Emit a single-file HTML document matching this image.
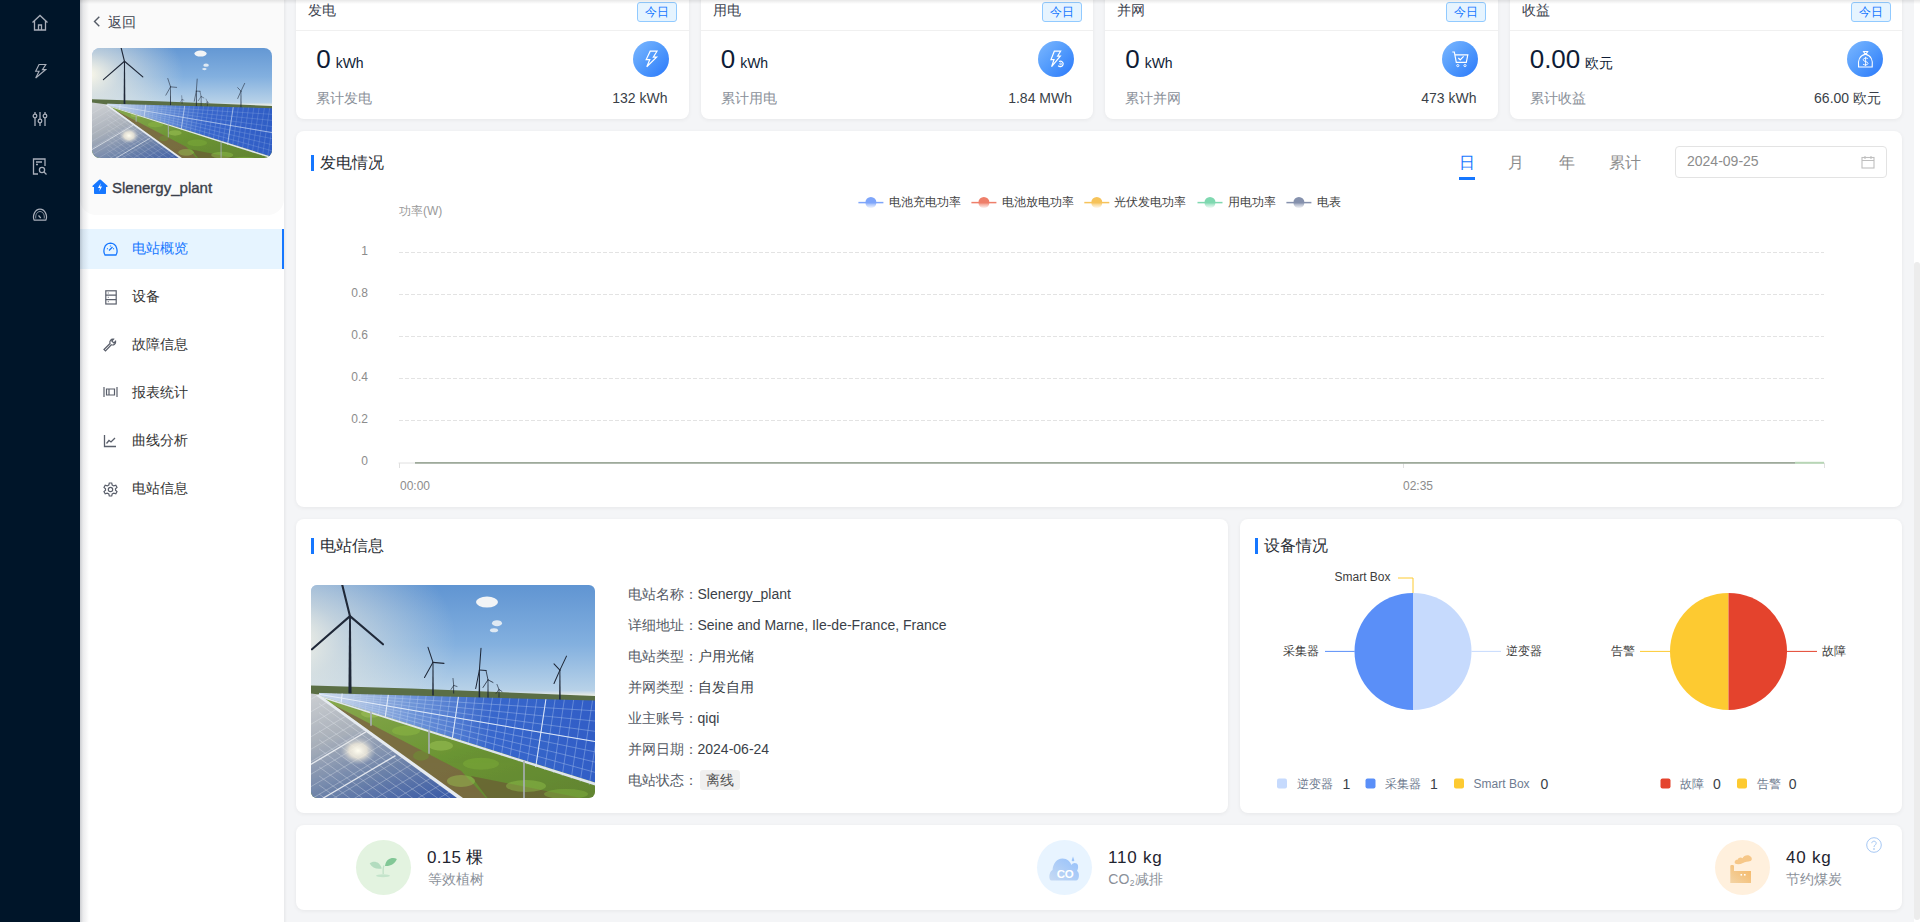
<!DOCTYPE html>
<html><head><meta charset="utf-8">
<style>
*{box-sizing:border-box;margin:0;padding:0}
html,body{width:1920px;height:922px;overflow:hidden;background:#f4f5f7;font-family:"Liberation Sans",sans-serif;color:#333}
.a{position:absolute;white-space:nowrap}
#nav{position:absolute;left:0;top:0;width:80px;height:922px;background:#001529}
#side{position:absolute;left:80px;top:0;width:204px;height:922px;background:#fff}
#sidetop{position:absolute;left:0;top:0;width:204px;height:215px;background:#fafafa;border-radius:0 0 16px 16px}
.card{position:absolute;background:#fff;border-radius:8px;box-shadow:0 1px 4px rgba(0,0,0,0.06)}
.t14{font-size:14px;line-height:16px}
.t12{font-size:12px;line-height:14px}
.tag{position:absolute;width:40px;height:20px;border:1px solid #91caff;background:#e6f4ff;color:#1677ff;border-radius:3px;font-size:12px;line-height:18px;text-align:center}
.ico{position:absolute;width:36px;height:36px;border-radius:50%;background:linear-gradient(135deg,#7db8ff 0%,#519afc 50%,#2a78fb 100%)}
.bar{position:absolute;width:3px;height:16px;background:#1677ff}
.menu{position:absolute;left:0;width:204px;height:40px}
.menu .tx{position:absolute;left:52px;top:11.4px;font-size:14px;line-height:16px;color:#333}
.menu svg{position:absolute;left:23px;top:13px}
</style></head><body>
<div id="nav">
  <svg class="a" style="left:31px;top:14px" width="18" height="18" viewBox="0 0 18 18" fill="none" stroke="#a9afba" stroke-width="1.3"><path d="M1.5 8.5 L9 1.5 L16.5 8.5 M3.5 7 V16 H14.5 V7 M7.5 16 V11 H10.5 V16"/></svg>
  <svg class="a" style="left:33.5px;top:62.5px" width="13.5" height="16.5" viewBox="0 0 16 18" fill="none" stroke="#a9afba" stroke-width="1.35"><path d="M6 1 H14 L10 7 H14 L2 17 L6 9 H2 Z"/></svg>
  <svg class="a" style="left:32px;top:111px" width="16" height="16" viewBox="0 0 16 16" fill="none" stroke="#a9afba" stroke-width="1.3"><path d="M3 1V15M8 1V15M13 1V15"/><circle cx="3" cy="5" r="1.8" fill="#001529"/><circle cx="8" cy="10" r="1.8" fill="#001529"/><circle cx="13" cy="5" r="1.8" fill="#001529"/></svg>
  <svg class="a" style="left:32px;top:158px" width="16" height="17" viewBox="0 0 16 17" fill="none" stroke="#a9afba" stroke-width="1.3"><path d="M6 16H1.5V1H13V8"/><path d="M4 4H10M4 6.5H6"/><circle cx="10" cy="12" r="2.6"/><path d="M12 14L14.5 16.5"/></svg>
  <svg class="a" style="left:32px;top:208px" width="16" height="13" viewBox="0 0 16 13" fill="none" stroke="#a9afba" stroke-width="1.2"><path d="M2.2 12.2C0.2 8 2.8 1.2 8 1.2C13.2 1.2 15.8 8 13.8 12.2Z"/><path d="M3.8 10.5C3.2 6.5 5.3 3.5 8 3.5C10.7 3.5 12.8 6.5 12.2 10.5" stroke-width="0.8"/><path d="M6.5 7.5L8.8 10"/></svg>
</div>
<div id="side">
  <div id="sidetop"></div>
  <div style="position:absolute;z-index:5;left:0;top:0;width:9px;height:922px;background:linear-gradient(90deg,rgba(0,10,30,0.2),rgba(0,10,30,0.08) 35%,rgba(0,0,0,0))"></div>
  <svg class="a" style="left:13px;top:16px" width="8" height="11" viewBox="0 0 8 11" fill="none" stroke="#555b66" stroke-width="1.4"><path d="M6.3 0.8L1.5 5.5L6.3 10.3"/></svg>
  <div class="a t14" style="left:27.7px;top:14px;color:#3e4450">返回</div>
  <div class="a" id="simg" style="left:12px;top:48px;width:180px;height:110px;border-radius:8px;overflow:hidden"><svg width="180" height="110" viewBox="0 0 180 110"><g transform="translate(10.85,-3.9) scale(0.555)"><defs><linearGradient id="ssky" x1="0" y1="0" x2="0" y2="1"><stop offset="0" stop-color="#5a90d0"/><stop offset="0.3" stop-color="#83b0df"/><stop offset="0.5" stop-color="#b8d2e8"/><stop offset="0.52" stop-color="#e6ebe6"/><stop offset="1" stop-color="#e6ebe6"/></linearGradient><radialGradient id="ssun" cx="0" cy="0.28" r="0.5"><stop offset="0" stop-color="#fffbea" stop-opacity="1"/><stop offset="0.35" stop-color="#f4efe0" stop-opacity="0.6"/><stop offset="1" stop-color="#f4efe0" stop-opacity="0"/></radialGradient><linearGradient id="span" x1="0" y1="0" x2="1" y2="0"><stop offset="0" stop-color="#d6dfe8"/><stop offset="0.3" stop-color="#6f95d8"/><stop offset="0.55" stop-color="#3a68cc"/><stop offset="1" stop-color="#2f5cc4"/></linearGradient><linearGradient id="span2" x1="0" y1="0" x2="0.6" y2="1"><stop offset="0" stop-color="#d6d8da"/><stop offset="0.4" stop-color="#a9b0ba"/><stop offset="0.7" stop-color="#6f84aa"/><stop offset="1" stop-color="#3e5ea8"/></linearGradient><linearGradient id="sgr" x1="0" y1="0" x2="1" y2="1"><stop offset="0" stop-color="#8fae55"/><stop offset="0.5" stop-color="#6b9434"/><stop offset="1" stop-color="#5e7f30"/></linearGradient><radialGradient id="sglint" cx="0.5" cy="0.5" r="0.5"><stop offset="0" stop-color="#fffdf0"/><stop offset="0.5" stop-color="#f5eedc" stop-opacity="0.8"/><stop offset="1" stop-color="#c8ccd2" stop-opacity="0"/></radialGradient></defs><rect x="-30" y="-10" width="350" height="230" fill="url(#ssky)"/><rect x="-30" y="-10" width="350" height="230" fill="url(#ssun)"/><ellipse cx="176" cy="17" rx="11" ry="5.5" fill="#f2f4f6"/><ellipse cx="186" cy="38" rx="5" ry="3" fill="#dfe9f3"/><ellipse cx="183" cy="45" rx="4" ry="2" fill="#dfe9f3"/><path d="M-30 99 L100 103 L320 112 L320 122 L-30 112Z" fill="#5b6f45"/><path d="M37.44 108 L38.09 31 L39.91 31 L40.56 108Z" fill="#1f2838"/><path d="M39 31 L31 -1" stroke="#1f2838" stroke-width="2.08" stroke-linecap="round"/><path d="M39 31 L1 64" stroke="#1f2838" stroke-width="2.08" stroke-linecap="round"/><path d="M39 31 L72 59" stroke="#1f2838" stroke-width="2.08" stroke-linecap="round"/><path d="M121.22 110 L121.545 77 L122.455 77 L122.78 110Z" fill="#1f2838"/><path d="M122 77 L117 62" stroke="#1f2838" stroke-width="1.04" stroke-linecap="round"/><path d="M122 77 L113.5 92" stroke="#1f2838" stroke-width="1.04" stroke-linecap="round"/><path d="M122 77 L133 78" stroke="#1f2838" stroke-width="1.04" stroke-linecap="round"/><path d="M167.62 113 L167.945 84.7 L168.85500000000002 84.7 L169.18 113Z" fill="#1f2838"/><path d="M168.4 84.7 L170 63" stroke="#1f2838" stroke-width="1.04" stroke-linecap="round"/><path d="M168.4 84.7 L164.7 103" stroke="#1f2838" stroke-width="1.04" stroke-linecap="round"/><path d="M168.4 84.7 L175 85" stroke="#1f2838" stroke-width="1.04" stroke-linecap="round"/><path d="M176.4 115 L176.65 94.4 L177.35 94.4 L177.6 115Z" fill="#1f2838"/><path d="M177 94.4 L175 85" stroke="#1f2838" stroke-width="0.8" stroke-linecap="round"/><path d="M177 94.4 L172 102" stroke="#1f2838" stroke-width="0.8" stroke-linecap="round"/><path d="M177 94.4 L182 97" stroke="#1f2838" stroke-width="0.8" stroke-linecap="round"/><path d="M248.12 115 L248.445 84.7 L249.35500000000002 84.7 L249.68 115Z" fill="#1f2838"/><path d="M248.9 84.7 L255.5 70.8" stroke="#1f2838" stroke-width="1.04" stroke-linecap="round"/><path d="M248.9 84.7 L243 78.5" stroke="#1f2838" stroke-width="1.04" stroke-linecap="round"/><path d="M248.9 84.7 L243 98" stroke="#1f2838" stroke-width="1.04" stroke-linecap="round"/><path d="M142.22 108 L142.42 100 L142.98 100 L143.17999999999998 108Z" fill="#1f2838"/><path d="M142.7 100 L142 93" stroke="#1f2838" stroke-width="0.6400000000000001" stroke-linecap="round"/><path d="M142.7 100 L140 104" stroke="#1f2838" stroke-width="0.6400000000000001" stroke-linecap="round"/><path d="M142.7 100 L146 101" stroke="#1f2838" stroke-width="0.6400000000000001" stroke-linecap="round"/><path d="M187.52 112 L187.72 104 L188.28 104 L188.48 112Z" fill="#1f2838"/><path d="M188 104 L186 99" stroke="#1f2838" stroke-width="0.6400000000000001" stroke-linecap="round"/><path d="M188 104 L185 108" stroke="#1f2838" stroke-width="0.6400000000000001" stroke-linecap="round"/><path d="M188 104 L191 106" stroke="#1f2838" stroke-width="0.6400000000000001" stroke-linecap="round"/><path d="M-30 108 L320 118 L320 230 L-30 230Z" fill="url(#sgr)"/><path d="M20 118 L150 185 L175 212 L135 212Z" fill="#7d6044" opacity="0.75"/><path d="M160 190 L320 222 L320 230 L190 230Z" fill="#6a5436" opacity="0.6"/><ellipse cx="60" cy="128" rx="10" ry="4" fill="#a9c860" opacity="0.45"/><ellipse cx="95" cy="145" rx="14" ry="5" fill="#8fbd45" opacity="0.45"/><ellipse cx="130" cy="160" rx="12" ry="5" fill="#a6cc58" opacity="0.45"/><ellipse cx="170" cy="178" rx="18" ry="6" fill="#7fb03a" opacity="0.45"/><ellipse cx="215" cy="200" rx="20" ry="6" fill="#92c24c" opacity="0.45"/><ellipse cx="255" cy="208" rx="22" ry="5" fill="#86b640" opacity="0.45"/><ellipse cx="150" cy="195" rx="14" ry="6" fill="#9cc653" opacity="0.45"/><ellipse cx="110" cy="170" rx="8" ry="5" fill="#6d9a32" opacity="0.45"/><path d="M8 107.5 L320 116 L320 208 L8 110Z" fill="url(#span)"/><path d="M11.1 107.6L11.0 111.0 M15.4 107.7L15.0 112.3 M20.2 107.8L19.7 113.8 M25.5 108.0L24.8 115.5 M31.2 108.1L30.1 117.3 M37.1 108.3L35.8 119.1 M43.3 108.5L41.7 121.1 M49.7 108.6L47.9 123.1 M56.3 108.8L54.2 125.2 M63.2 109.0L60.7 127.3 M70.1 109.2L67.3 129.5 M77.3 109.4L74.2 131.8 M84.6 109.6L81.1 134.0 M92.0 109.8L88.2 136.4 M99.6 110.0L95.4 138.8 M107.2 110.2L102.8 141.2 M115.1 110.4L110.3 143.6 M123.0 110.6L117.8 146.1 M131.0 110.9L125.5 148.6 M139.2 111.1L133.3 151.2 M147.4 111.3L141.2 153.8 M155.8 111.5L149.1 156.4 M164.2 111.8L157.2 159.1 M172.8 112.0L165.4 161.8 M181.4 112.2L173.6 164.5 M190.1 112.5L181.9 167.2 M198.9 112.7L190.3 170.0 M207.8 112.9L198.8 172.7 M216.7 113.2L207.4 175.6 M225.8 113.4L216.0 178.4 M234.9 113.7L224.7 181.3 M244.1 113.9L233.5 184.1 M253.3 114.2L242.3 187.1 M262.6 114.4L251.2 190.0 M272.0 114.7L260.2 192.9 M281.5 115.0L269.2 195.9 M291.0 115.2L278.3 198.9 M300.6 115.5L287.5 201.9 M310.3 115.7L296.7 204.9 M8 107.8L320 127.5 M8 108.1L320 139.0 M8 108.4L320 150.5 M8 108.8L320 162.0 M8 109.1L320 173.5 M8 109.4L320 185.0 M8 109.7L320 196.5" stroke="#c0d4f4" stroke-width="0.45" opacity="0.8"/><path d="M31.2 108.1L30.1 117.3 M77.3 109.4L74.2 131.8 M147.4 111.3L141.2 153.8 M234.9 113.7L224.7 181.3 M8 108.7L320 162" stroke="#e8f0fb" stroke-width="1" opacity="0.9"/><path d="M8 110 L320 208 L320 211 L8 111.5Z" fill="#dfe5ec"/><path d="M118 144V168M213 175V212M60 126V140" stroke="#a9b0b6" stroke-width="1.6"/><clipPath id="slp"><path d="M-30 104 L8 109 L150 212 L160 230 L-30 230Z"/></clipPath><path d="M-30 104 L8 109 L150 212 L160 230 L-30 230Z" fill="url(#span2)"/><g clip-path="url(#slp)"><path d="M8 118.0L208 261.6 M8 127.0L208 270.6 M8 136.0L208 279.6 M8 145.0L208 288.6 M8 154.0L208 297.6 M8 163.0L208 306.6 M8 172.0L208 315.6 M8 181.0L208 324.6 M8 190.0L208 333.6 M8 199.0L208 342.6 M8 208.0L208 351.6 M8.0 109.0L-192.0 227.0 M17.5 115.8L-182.5 233.8 M27.0 122.6L-173.0 240.6 M36.5 129.5L-163.5 247.5 M46.0 136.3L-154.0 254.3 M55.5 143.1L-144.5 261.1 M65.0 149.9L-135.0 267.9 M74.5 156.7L-125.5 274.7 M84.0 163.6L-116.0 281.6 M93.5 170.4L-106.5 288.4 M103.0 177.2L-97.0 295.2 M112.5 184.0L-87.5 302.0 M122.0 190.9L-78.0 308.9 M131.5 197.7L-68.5 315.7 M141.0 204.5L-59.0 322.5 M150.5 211.3L-49.5 329.3" stroke="#eef2f6" stroke-width="0.5" opacity="0.6"/><path d="M55 146L-45 205M84.5 169.8L-20 231" stroke="#f4f6f9" stroke-width="1.3" opacity="0.85"/></g><ellipse cx="47" cy="165" rx="18" ry="14" fill="url(#sglint)"/><path d="M8 109 L152 212 L146 212 L5 110Z" fill="#e6ebf0"/></g></svg></div><!--/simg-->
  <svg class="a" style="left:12px;top:179px" width="16" height="16" viewBox="0 0 16 16"><path d="M7.2 0.8Q8 0.2 8.8 0.8L15.4 6.8Q16 7.6 15.2 7.9H14V14.2Q14 15 13.2 15H2.8Q2 15 2 14.2V7.9H0.8Q0 7.6 0.6 6.8Z" fill="#1677ff"/><path d="M8.8 4L6 9H8L7.2 12.5L10 7.5H8Z" fill="#fff"/></svg>
  <div class="a" style="left:32px;top:179px;font-size:15px;line-height:17px;-webkit-text-stroke:0.35px #3a3f4a;color:#3a3f4a">Slenergy_plant</div>

  <div class="menu" style="top:229px;background:#e6f4ff"><div style="position:absolute;right:0;top:0;width:2px;height:40px;background:#1677ff"></div>
    <svg width="15" height="14" viewBox="0 0 15 14" fill="none" stroke="#1677ff" stroke-width="1.3"><path d="M2 13C0 10 0.5 1.5 7.5 1.2C14.5 1.5 15 10 13 13Z"/><path d="M6 8.5L9.5 5M4 6.5L4.8 7M7.5 3.6V4.6M11 6.5L10.2 7"/></svg>
    <div class="tx" style="color:#1677ff">电站概览</div></div>
  <div class="menu" style="top:277px">
    <svg style="left:25px" width="12" height="15" viewBox="0 0 12 15" fill="none" stroke="#5a5f6b" stroke-width="1.2"><rect x="0.8" y="0.8" width="10.4" height="13.2"/><path d="M0.8 5.2H11.2M0.8 9.6H11.2"/><path d="M3.3 2.5V3.5M3.3 6.8V7.8M3.3 11.2V12.2" stroke-width="0.9"/></svg>
    <div class="tx">设备</div></div>
  <div class="menu" style="top:325px">
    <svg width="14" height="14" viewBox="0 0 14 14" fill="none" stroke="#5a5f6b" stroke-width="1.2"><path d="M1 11.5L7 5.5C6.2 3 8 0.8 10.5 1.2L8.8 3L10.8 5L12.6 3.3C13 5.8 10.8 7.6 8.3 6.8L2.5 13Z"/></svg>
    <div class="tx">故障信息</div></div>
  <div class="menu" style="top:373px">
    <svg width="15" height="12" viewBox="0 0 15 12" fill="none" stroke="#5a5f6b" stroke-width="1.2"><path d="M1 1V11M14 1V11M3.5 3H11.5V9H3.5ZM6 3V9"/></svg>
    <div class="tx">报表统计</div></div>
  <div class="menu" style="top:421px">
    <svg width="14" height="14" viewBox="0 0 14 14" fill="none" stroke="#5a5f6b" stroke-width="1.3"><path d="M1.5 1V12.5H13"/><path d="M3.5 9.5L6 6.5L8 8L12 4"/></svg>
    <div class="tx">曲线分析</div></div>
  <div class="menu" style="top:469px">
    <svg width="15" height="15" viewBox="0 0 15 15" fill="none" stroke="#5a5f6b" stroke-width="1.2"><path d="M6.3 1H8.7L9.2 3L10.8 3.9L12.8 3.3L14 5.4L12.5 6.8V8.2L14 9.6L12.8 11.7L10.8 11.1L9.2 12L8.7 14H6.3L5.8 12L4.2 11.1L2.2 11.7L1 9.6L2.5 8.2V6.8L1 5.4L2.2 3.3L4.2 3.9L5.8 3Z"/><circle cx="7.5" cy="7.5" r="2.2"/></svg>
    <div class="tx">电站信息</div></div>
  <div style="position:absolute;left:204px;top:0;width:3px;height:922px;background:linear-gradient(90deg,rgba(0,0,0,0.05),rgba(0,0,0,0))"></div>
</div>
<div style="position:absolute;z-index:10;left:80px;top:0;width:1840px;height:4px;background:linear-gradient(180deg,rgba(0,0,0,0.09),rgba(0,0,0,0))"></div>

<!-- MAIN -->
<div id="main"><div class="card" style="left:296px;top:-20px;width:392.5px;height:139px">
  <div class="a t14" style="left:12px;top:22px;color:#3d4450">发电</div>
  <div class="tag" style="left:341px;top:22px">今日</div>
  <div style="position:absolute;left:0;top:50px;width:100%;height:1px;background:#f0f0f0"></div>
  <div class="a" style="left:20.2px;top:64px;font-size:26px;line-height:30px;color:#0e1c36">0<span style="font-size:14px;margin-left:5px">kWh</span></div>
  <div class="ico" style="left:337px;top:61px"><svg width="36" height="36" viewBox="0 0 36 36" style="position:absolute;left:0;top:0"><path d="M17.2 10.2H24L20.3 16.2H23.6L13.8 25.8L16.8 18.6H13.2Z" fill="none" stroke="#fff" stroke-width="1.2"/></svg></div>
  <div class="a t14" style="left:20px;top:110px;color:#8a9099">累计发电</div>
  <div class="a t14" style="right:21px;top:110px;color:#3a3f48">132 kWh</div>
</div>
<div class="card" style="left:700.5px;top:-20px;width:392.5px;height:139px">
  <div class="a t14" style="left:12px;top:22px;color:#3d4450">用电</div>
  <div class="tag" style="left:341px;top:22px">今日</div>
  <div style="position:absolute;left:0;top:50px;width:100%;height:1px;background:#f0f0f0"></div>
  <div class="a" style="left:20.2px;top:64px;font-size:26px;line-height:30px;color:#0e1c36">0<span style="font-size:14px;margin-left:5px">kWh</span></div>
  <div class="ico" style="left:337px;top:61px"><svg width="36" height="36" viewBox="0 0 36 36" style="position:absolute;left:0;top:0"><path d="M16.3 10.2H22.6L19.6 15.2H22.3L13.6 25.6L16 18.6H13Z" fill="none" stroke="#fff" stroke-width="1.2"/><path d="M21 20.5C23.5 19.5 25.8 21.5 25 23.8C24.3 25.8 21.5 26.2 20.2 24.6" fill="none" stroke="#fff" stroke-width="1.2"/><circle cx="22.6" cy="22.9" r="0.9" fill="none" stroke="#fff" stroke-width="0.8"/></svg></div>
  <div class="a t14" style="left:20px;top:110px;color:#8a9099">累计用电</div>
  <div class="a t14" style="right:21px;top:110px;color:#3a3f48">1.84 MWh</div>
</div>
<div class="card" style="left:1105px;top:-20px;width:392.5px;height:139px">
  <div class="a t14" style="left:12px;top:22px;color:#3d4450">并网</div>
  <div class="tag" style="left:341px;top:22px">今日</div>
  <div style="position:absolute;left:0;top:50px;width:100%;height:1px;background:#f0f0f0"></div>
  <div class="a" style="left:20.2px;top:64px;font-size:26px;line-height:30px;color:#0e1c36">0<span style="font-size:14px;margin-left:5px">kWh</span></div>
  <div class="ico" style="left:337px;top:61px"><svg width="36" height="36" viewBox="0 0 36 36" style="position:absolute;left:0;top:0"><path d="M10.3 11H12.3L14.3 21.3H24.3L25.8 13.8H13" fill="none" stroke="#fff" stroke-width="1.2"/><path d="M16.3 17L18.2 18.8L21.6 15.4" fill="none" stroke="#fff" stroke-width="1.2"/><circle cx="15.8" cy="24.6" r="1.1" fill="none" stroke="#fff" stroke-width="0.9"/><circle cx="23" cy="24.6" r="1.1" fill="none" stroke="#fff" stroke-width="0.9"/></svg></div>
  <div class="a t14" style="left:20px;top:110px;color:#8a9099">累计并网</div>
  <div class="a t14" style="right:21px;top:110px;color:#3a3f48">473 kWh</div>
</div>
<div class="card" style="left:1509.5px;top:-20px;width:392.5px;height:139px">
  <div class="a t14" style="left:12px;top:22px;color:#3d4450">收益</div>
  <div class="tag" style="left:341px;top:22px">今日</div>
  <div style="position:absolute;left:0;top:50px;width:100%;height:1px;background:#f0f0f0"></div>
  <div class="a" style="left:20.2px;top:64px;font-size:26px;line-height:30px;color:#0e1c36">0.00<span style="font-size:14px;margin-left:5px">欧元</span></div>
  <div class="ico" style="left:337px;top:61px"><svg width="36" height="36" viewBox="0 0 36 36" style="position:absolute;left:0;top:0"><path d="M16.6 10.5H20.6L19.3 12.7H17.9Z" fill="none" stroke="#fff" stroke-width="1.2"/><path d="M11.6 26H25.2C26.2 19.8 24 14.5 18.4 13.2C12.8 14.5 10.6 19.8 11.6 26Z" fill="none" stroke="#fff" stroke-width="1.2"/><path d="M20.8 17.6C20.3 16.8 16.2 16.6 16.2 18.8C16.2 20.8 21 20.3 21 22.4C21 24.3 17 24.3 16 23.2M18.6 15.8V25" fill="none" stroke="#fff" stroke-width="0.9"/></svg></div>
  <div class="a t14" style="left:20px;top:110px;color:#8a9099">累计收益</div>
  <div class="a t14" style="right:21px;top:110px;color:#3a3f48">66.00 欧元</div>
</div>
<div class="card" style="left:296px;top:131px;width:1606px;height:376px"></div>
<div class="bar" style="left:311px;top:155px"></div>
<div class="a" style="left:320px;top:154px;font-size:16px;line-height:18px;color:#2b2f36">发电情况</div>
<div class="a" style="left:1459px;top:154px;font-size:16px;line-height:18px;color:#1677ff">日</div>
<div class="a" style="left:1508px;top:154px;font-size:16px;line-height:18px;color:#8c8c8c">月</div>
<div class="a" style="left:1559px;top:154px;font-size:16px;line-height:18px;color:#8c8c8c">年</div>
<div class="a" style="left:1609px;top:154px;font-size:16px;line-height:18px;color:#8c8c8c">累计</div>
<div class="a" style="left:1459px;top:177px;width:16px;height:3px;background:#1677ff"></div>
<div class="a" style="left:1675px;top:146px;width:212px;height:32px;border:1px solid #e3e3e3;border-radius:4px;background:#fff"></div>
<div class="a t14" style="left:1687px;top:153px;color:#8c8c8c">2024-09-25</div>
<svg class="a" style="left:1861px;top:155px" width="14" height="14" viewBox="0 0 14 14" fill="none" stroke="#bfbfbf" stroke-width="1.1"><rect x="1" y="2.5" width="12" height="10.5"/><path d="M1 5.5H13M4 1V4M10 1V4"/></svg>
<svg class="a" style="left:296px;top:131px" width="1605" height="376" viewBox="0 0 1605 376"><defs><linearGradient id="lg0" x1="0" y1="0" x2="0" y2="1"><stop offset="0.45" stop-color="#7ea5fa"/><stop offset="1" stop-color="#7ea5fa" stop-opacity="0.1"/></linearGradient><linearGradient id="lg1" x1="0" y1="0" x2="0" y2="1"><stop offset="0.45" stop-color="#ee7f6a"/><stop offset="1" stop-color="#ee7f6a" stop-opacity="0.1"/></linearGradient><linearGradient id="lg2" x1="0" y1="0" x2="0" y2="1"><stop offset="0.45" stop-color="#f6c35a"/><stop offset="1" stop-color="#f6c35a" stop-opacity="0.1"/></linearGradient><linearGradient id="lg3" x1="0" y1="0" x2="0" y2="1"><stop offset="0.45" stop-color="#7fd8b0"/><stop offset="1" stop-color="#7fd8b0" stop-opacity="0.1"/></linearGradient><linearGradient id="lg4" x1="0" y1="0" x2="0" y2="1"><stop offset="0.45" stop-color="#8591ad"/><stop offset="1" stop-color="#8591ad" stop-opacity="0.1"/></linearGradient></defs><line x1="562.4" y1="71.6" x2="587.4" y2="71.6" stroke="#7ea5fa" stroke-width="1.5"/><circle cx="574.9" cy="71.5" r="5.5" fill="url(#lg0)"/><line x1="675.4" y1="71.6" x2="700.4" y2="71.6" stroke="#ee7f6a" stroke-width="1.5"/><circle cx="687.9" cy="71.5" r="5.5" fill="url(#lg1)"/><line x1="788.3" y1="71.6" x2="813.3" y2="71.6" stroke="#f6c35a" stroke-width="1.5"/><circle cx="800.8" cy="71.5" r="5.5" fill="url(#lg2)"/><line x1="901.5" y1="71.6" x2="926.5" y2="71.6" stroke="#7fd8b0" stroke-width="1.5"/><circle cx="914.0" cy="71.5" r="5.5" fill="url(#lg3)"/><line x1="990.4000000000001" y1="71.6" x2="1015.4000000000001" y2="71.6" stroke="#8591ad" stroke-width="1.5"/><circle cx="1002.9000000000001" cy="71.5" r="5.5" fill="url(#lg4)"/><line x1="103" y1="121.5" x2="1528" y2="121.5" stroke="#e3e3e3" stroke-width="1" stroke-dasharray="4 2"/><line x1="103" y1="163.5" x2="1528" y2="163.5" stroke="#e3e3e3" stroke-width="1" stroke-dasharray="4 2"/><line x1="103" y1="205.5" x2="1528" y2="205.5" stroke="#e3e3e3" stroke-width="1" stroke-dasharray="4 2"/><line x1="103" y1="247.5" x2="1528" y2="247.5" stroke="#e3e3e3" stroke-width="1" stroke-dasharray="4 2"/><line x1="103" y1="289.5" x2="1528" y2="289.5" stroke="#e3e3e3" stroke-width="1" stroke-dasharray="4 2"/><line x1="102.5" y1="332" x2="1528.5" y2="332" stroke="#e0e0e0" stroke-width="1"/><line x1="103.5" y1="332" x2="103.5" y2="337" stroke="#e0e0e0" stroke-width="1"/><line x1="1107.5" y1="332" x2="1107.5" y2="337" stroke="#e0e0e0" stroke-width="1"/><line x1="1528.5" y1="332" x2="1528.5" y2="337" stroke="#e0e0e0" stroke-width="1"/><line x1="119" y1="331.8" x2="1499" y2="331.8" stroke="#9eaa9b" stroke-width="1.8"/><line x1="1499" y1="331.8" x2="1528" y2="331.8" stroke="#b8d6b6" stroke-width="2"/></svg>
<div class="a t12" style="left:888.6px;top:195px;color:#444">电池充电功率</div>
<div class="a t12" style="left:1001.7px;top:195px;color:#444">电池放电功率</div>
<div class="a t12" style="left:1114.4px;top:195px;color:#444">光伏发电功率</div>
<div class="a t12" style="left:1227.8px;top:195px;color:#444">用电功率</div>
<div class="a t12" style="left:1316.7px;top:195px;color:#444">电表</div>
<div class="a t12" style="left:399px;top:204px;color:#9a9a9a">功率(W)</div>
<div class="a t12" style="right:1552px;top:244px;color:#8c8c8c">1</div>
<div class="a t12" style="right:1552px;top:286px;color:#8c8c8c">0.8</div>
<div class="a t12" style="right:1552px;top:328px;color:#8c8c8c">0.6</div>
<div class="a t12" style="right:1552px;top:370px;color:#8c8c8c">0.4</div>
<div class="a t12" style="right:1552px;top:412px;color:#8c8c8c">0.2</div>
<div class="a t12" style="right:1552px;top:454px;color:#8c8c8c">0</div>
<div class="a t12" style="left:400px;top:479px;color:#8c8c8c">00:00</div>
<div class="a t12" style="left:1403px;top:479px;color:#8c8c8c">02:35</div>
<div class="card" style="left:296px;top:519px;width:932px;height:294px"></div>
<div class="bar" style="left:311px;top:538px"></div>
<div class="a" style="left:320px;top:537px;font-size:16px;line-height:18px;color:#2b2f36">电站信息</div>
<svg class="a" style="left:311px;top:584.5px;border-radius:6px" width="284" height="213" viewBox="0 0 284 212" preserveAspectRatio="none"><defs><linearGradient id="bsky" x1="0" y1="0" x2="0" y2="1"><stop offset="0" stop-color="#5a90d0"/><stop offset="0.3" stop-color="#83b0df"/><stop offset="0.5" stop-color="#b8d2e8"/><stop offset="0.52" stop-color="#e6ebe6"/><stop offset="1" stop-color="#e6ebe6"/></linearGradient><radialGradient id="bsun" cx="0" cy="0.28" r="0.5"><stop offset="0" stop-color="#fffbea" stop-opacity="1"/><stop offset="0.35" stop-color="#f4efe0" stop-opacity="0.6"/><stop offset="1" stop-color="#f4efe0" stop-opacity="0"/></radialGradient><linearGradient id="bpan" x1="0" y1="0" x2="1" y2="0"><stop offset="0" stop-color="#d6dfe8"/><stop offset="0.3" stop-color="#6f95d8"/><stop offset="0.55" stop-color="#3a68cc"/><stop offset="1" stop-color="#2f5cc4"/></linearGradient><linearGradient id="bpan2" x1="0" y1="0" x2="0.6" y2="1"><stop offset="0" stop-color="#d6d8da"/><stop offset="0.4" stop-color="#a9b0ba"/><stop offset="0.7" stop-color="#6f84aa"/><stop offset="1" stop-color="#3e5ea8"/></linearGradient><linearGradient id="bgr" x1="0" y1="0" x2="1" y2="1"><stop offset="0" stop-color="#8fae55"/><stop offset="0.5" stop-color="#6b9434"/><stop offset="1" stop-color="#5e7f30"/></linearGradient><radialGradient id="bglint" cx="0.5" cy="0.5" r="0.5"><stop offset="0" stop-color="#fffdf0"/><stop offset="0.5" stop-color="#f5eedc" stop-opacity="0.8"/><stop offset="1" stop-color="#c8ccd2" stop-opacity="0"/></radialGradient></defs><rect x="-30" y="-10" width="350" height="230" fill="url(#bsky)"/><rect x="-30" y="-10" width="350" height="230" fill="url(#bsun)"/><ellipse cx="176" cy="17" rx="11" ry="5.5" fill="#f2f4f6"/><ellipse cx="186" cy="38" rx="5" ry="3" fill="#dfe9f3"/><ellipse cx="183" cy="45" rx="4" ry="2" fill="#dfe9f3"/><path d="M-30 99 L100 103 L320 112 L320 122 L-30 112Z" fill="#5b6f45"/><path d="M37.44 108 L38.09 31 L39.91 31 L40.56 108Z" fill="#1f2838"/><path d="M39 31 L31 -1" stroke="#1f2838" stroke-width="2.08" stroke-linecap="round"/><path d="M39 31 L1 64" stroke="#1f2838" stroke-width="2.08" stroke-linecap="round"/><path d="M39 31 L72 59" stroke="#1f2838" stroke-width="2.08" stroke-linecap="round"/><path d="M121.22 110 L121.545 77 L122.455 77 L122.78 110Z" fill="#1f2838"/><path d="M122 77 L117 62" stroke="#1f2838" stroke-width="1.04" stroke-linecap="round"/><path d="M122 77 L113.5 92" stroke="#1f2838" stroke-width="1.04" stroke-linecap="round"/><path d="M122 77 L133 78" stroke="#1f2838" stroke-width="1.04" stroke-linecap="round"/><path d="M167.62 113 L167.945 84.7 L168.85500000000002 84.7 L169.18 113Z" fill="#1f2838"/><path d="M168.4 84.7 L170 63" stroke="#1f2838" stroke-width="1.04" stroke-linecap="round"/><path d="M168.4 84.7 L164.7 103" stroke="#1f2838" stroke-width="1.04" stroke-linecap="round"/><path d="M168.4 84.7 L175 85" stroke="#1f2838" stroke-width="1.04" stroke-linecap="round"/><path d="M176.4 115 L176.65 94.4 L177.35 94.4 L177.6 115Z" fill="#1f2838"/><path d="M177 94.4 L175 85" stroke="#1f2838" stroke-width="0.8" stroke-linecap="round"/><path d="M177 94.4 L172 102" stroke="#1f2838" stroke-width="0.8" stroke-linecap="round"/><path d="M177 94.4 L182 97" stroke="#1f2838" stroke-width="0.8" stroke-linecap="round"/><path d="M248.12 115 L248.445 84.7 L249.35500000000002 84.7 L249.68 115Z" fill="#1f2838"/><path d="M248.9 84.7 L255.5 70.8" stroke="#1f2838" stroke-width="1.04" stroke-linecap="round"/><path d="M248.9 84.7 L243 78.5" stroke="#1f2838" stroke-width="1.04" stroke-linecap="round"/><path d="M248.9 84.7 L243 98" stroke="#1f2838" stroke-width="1.04" stroke-linecap="round"/><path d="M142.22 108 L142.42 100 L142.98 100 L143.17999999999998 108Z" fill="#1f2838"/><path d="M142.7 100 L142 93" stroke="#1f2838" stroke-width="0.6400000000000001" stroke-linecap="round"/><path d="M142.7 100 L140 104" stroke="#1f2838" stroke-width="0.6400000000000001" stroke-linecap="round"/><path d="M142.7 100 L146 101" stroke="#1f2838" stroke-width="0.6400000000000001" stroke-linecap="round"/><path d="M187.52 112 L187.72 104 L188.28 104 L188.48 112Z" fill="#1f2838"/><path d="M188 104 L186 99" stroke="#1f2838" stroke-width="0.6400000000000001" stroke-linecap="round"/><path d="M188 104 L185 108" stroke="#1f2838" stroke-width="0.6400000000000001" stroke-linecap="round"/><path d="M188 104 L191 106" stroke="#1f2838" stroke-width="0.6400000000000001" stroke-linecap="round"/><path d="M-30 108 L320 118 L320 230 L-30 230Z" fill="url(#bgr)"/><path d="M20 118 L150 185 L175 212 L135 212Z" fill="#7d6044" opacity="0.75"/><path d="M160 190 L320 222 L320 230 L190 230Z" fill="#6a5436" opacity="0.6"/><ellipse cx="60" cy="128" rx="10" ry="4" fill="#a9c860" opacity="0.45"/><ellipse cx="95" cy="145" rx="14" ry="5" fill="#8fbd45" opacity="0.45"/><ellipse cx="130" cy="160" rx="12" ry="5" fill="#a6cc58" opacity="0.45"/><ellipse cx="170" cy="178" rx="18" ry="6" fill="#7fb03a" opacity="0.45"/><ellipse cx="215" cy="200" rx="20" ry="6" fill="#92c24c" opacity="0.45"/><ellipse cx="255" cy="208" rx="22" ry="5" fill="#86b640" opacity="0.45"/><ellipse cx="150" cy="195" rx="14" ry="6" fill="#9cc653" opacity="0.45"/><ellipse cx="110" cy="170" rx="8" ry="5" fill="#6d9a32" opacity="0.45"/><path d="M8 107.5 L320 116 L320 208 L8 110Z" fill="url(#bpan)"/><path d="M11.1 107.6L11.0 111.0 M15.4 107.7L15.0 112.3 M20.2 107.8L19.7 113.8 M25.5 108.0L24.8 115.5 M31.2 108.1L30.1 117.3 M37.1 108.3L35.8 119.1 M43.3 108.5L41.7 121.1 M49.7 108.6L47.9 123.1 M56.3 108.8L54.2 125.2 M63.2 109.0L60.7 127.3 M70.1 109.2L67.3 129.5 M77.3 109.4L74.2 131.8 M84.6 109.6L81.1 134.0 M92.0 109.8L88.2 136.4 M99.6 110.0L95.4 138.8 M107.2 110.2L102.8 141.2 M115.1 110.4L110.3 143.6 M123.0 110.6L117.8 146.1 M131.0 110.9L125.5 148.6 M139.2 111.1L133.3 151.2 M147.4 111.3L141.2 153.8 M155.8 111.5L149.1 156.4 M164.2 111.8L157.2 159.1 M172.8 112.0L165.4 161.8 M181.4 112.2L173.6 164.5 M190.1 112.5L181.9 167.2 M198.9 112.7L190.3 170.0 M207.8 112.9L198.8 172.7 M216.7 113.2L207.4 175.6 M225.8 113.4L216.0 178.4 M234.9 113.7L224.7 181.3 M244.1 113.9L233.5 184.1 M253.3 114.2L242.3 187.1 M262.6 114.4L251.2 190.0 M272.0 114.7L260.2 192.9 M281.5 115.0L269.2 195.9 M291.0 115.2L278.3 198.9 M300.6 115.5L287.5 201.9 M310.3 115.7L296.7 204.9 M8 107.8L320 127.5 M8 108.1L320 139.0 M8 108.4L320 150.5 M8 108.8L320 162.0 M8 109.1L320 173.5 M8 109.4L320 185.0 M8 109.7L320 196.5" stroke="#c0d4f4" stroke-width="0.45" opacity="0.8"/><path d="M31.2 108.1L30.1 117.3 M77.3 109.4L74.2 131.8 M147.4 111.3L141.2 153.8 M234.9 113.7L224.7 181.3 M8 108.7L320 162" stroke="#e8f0fb" stroke-width="1" opacity="0.9"/><path d="M8 110 L320 208 L320 211 L8 111.5Z" fill="#dfe5ec"/><path d="M118 144V168M213 175V212M60 126V140" stroke="#a9b0b6" stroke-width="1.6"/><clipPath id="blp"><path d="M-30 104 L8 109 L150 212 L160 230 L-30 230Z"/></clipPath><path d="M-30 104 L8 109 L150 212 L160 230 L-30 230Z" fill="url(#bpan2)"/><g clip-path="url(#blp)"><path d="M8 118.0L208 261.6 M8 127.0L208 270.6 M8 136.0L208 279.6 M8 145.0L208 288.6 M8 154.0L208 297.6 M8 163.0L208 306.6 M8 172.0L208 315.6 M8 181.0L208 324.6 M8 190.0L208 333.6 M8 199.0L208 342.6 M8 208.0L208 351.6 M8.0 109.0L-192.0 227.0 M17.5 115.8L-182.5 233.8 M27.0 122.6L-173.0 240.6 M36.5 129.5L-163.5 247.5 M46.0 136.3L-154.0 254.3 M55.5 143.1L-144.5 261.1 M65.0 149.9L-135.0 267.9 M74.5 156.7L-125.5 274.7 M84.0 163.6L-116.0 281.6 M93.5 170.4L-106.5 288.4 M103.0 177.2L-97.0 295.2 M112.5 184.0L-87.5 302.0 M122.0 190.9L-78.0 308.9 M131.5 197.7L-68.5 315.7 M141.0 204.5L-59.0 322.5 M150.5 211.3L-49.5 329.3" stroke="#eef2f6" stroke-width="0.5" opacity="0.6"/><path d="M55 146L-45 205M84.5 169.8L-20 231" stroke="#f4f6f9" stroke-width="1.3" opacity="0.85"/></g><ellipse cx="47" cy="165" rx="18" ry="14" fill="url(#bglint)"/><path d="M8 109 L152 212 L146 212 L5 110Z" fill="#e6ebf0"/></svg>
<div class="a t14" style="left:627.6px;top:585.8px;color:#555b66">电站名称：</div>
<div class="a t14" style="left:697.5px;top:585.8px;color:#3a3f48">Slenergy_plant</div>
<div class="a t14" style="left:627.6px;top:616.5px;color:#555b66">详细地址：</div>
<div class="a t14" style="left:697.5px;top:616.5px;color:#3a3f48">Seine and Marne, Ile-de-France, France</div>
<div class="a t14" style="left:627.6px;top:647.5px;color:#555b66">电站类型：</div>
<div class="a t14" style="left:697.5px;top:647.5px;color:#3a3f48">户用光储</div>
<div class="a t14" style="left:627.6px;top:678.5px;color:#555b66">并网类型：</div>
<div class="a t14" style="left:697.5px;top:678.5px;color:#3a3f48">自发自用</div>
<div class="a t14" style="left:627.6px;top:709.5px;color:#555b66">业主账号：</div>
<div class="a t14" style="left:697.5px;top:709.5px;color:#3a3f48">qiqi</div>
<div class="a t14" style="left:627.6px;top:740.5px;color:#555b66">并网日期：</div>
<div class="a t14" style="left:697.5px;top:740.5px;color:#3a3f48">2024-06-24</div>
<div class="a t14" style="left:627.6px;top:772px;color:#555b66">电站状态：</div>
<div class="a" style="left:700px;top:770px;width:40px;height:20px;background:#f0f0f0;border-radius:3px;font-size:14px;line-height:20px;text-align:center;color:#555">离线</div>
<div class="card" style="left:1240px;top:519px;width:662px;height:294px"></div>
<div class="bar" style="left:1255px;top:538px"></div>
<div class="a" style="left:1264px;top:537px;font-size:16px;line-height:18px;color:#2b2f36">设备情况</div>
<svg class="a" style="left:1240px;top:519px" width="661" height="293" viewBox="0 0 661 293"><path d="M173 73.89999999999998 A58.5 58.5 0 0 0 173 190.89999999999998Z" fill="#5a8ff8"/><path d="M173 73.89999999999998 A58.5 58.5 0 0 1 173 190.89999999999998Z" fill="#c6dafd"/><path d="M488.5 73.89999999999998 A58.5 58.5 0 0 0 488.5 190.89999999999998Z" fill="#fdca31"/><path d="M488.5 73.89999999999998 A58.5 58.5 0 0 1 488.5 190.89999999999998Z" fill="#e4432d"/><path d="M158 59H173V74" fill="none" stroke="#fdca31" stroke-width="1"/><line x1="85" y1="132.39999999999998" x2="114.59999999999991" y2="132.39999999999998" stroke="#5a8ff8" stroke-width="1"/><line x1="231.5" y1="132.39999999999998" x2="261" y2="132.39999999999998" stroke="#c6dafd" stroke-width="1"/><line x1="400" y1="132.39999999999998" x2="430" y2="132.39999999999998" stroke="#fdca31" stroke-width="1"/><line x1="547" y1="132.39999999999998" x2="577" y2="132.39999999999998" stroke="#e4432d" stroke-width="1"/><rect x="37" y="259.5" width="10" height="10" rx="2" fill="#c6dafd"/><rect x="125.5" y="259.5" width="10" height="10" rx="2" fill="#5a8ff8"/><rect x="214" y="259.5" width="10" height="10" rx="2" fill="#fdca31"/><rect x="420.5" y="259.5" width="10" height="10" rx="2" fill="#e4432d"/><rect x="497" y="259.5" width="10" height="10" rx="2" fill="#fdca31"/></svg>
<div class="a t12" style="left:1334.5px;top:570px;color:#3d3d3d">Smart Box</div>
<div class="a t12" style="left:1283px;top:644px;color:#3d3d3d">采集器</div>
<div class="a t12" style="left:1506px;top:644px;color:#3d3d3d">逆变器</div>
<div class="a t12" style="left:1611.4px;top:644px;color:#3d3d3d">告警</div>
<div class="a t12" style="left:1822px;top:644px;color:#3d3d3d">故障</div>
<div class="a" style="left:1297px;top:777px;font-size:12px;line-height:15px;color:#6e7b8f">逆变器</div>
<div class="a" style="left:1342.6px;top:775.7px;font-size:14px;line-height:16px;color:#3a3f48">1</div>
<div class="a" style="left:1385px;top:777px;font-size:12px;line-height:15px;color:#6e7b8f">采集器</div>
<div class="a" style="left:1430px;top:775.7px;font-size:14px;line-height:16px;color:#3a3f48">1</div>
<div class="a" style="left:1473.6px;top:777px;font-size:12px;line-height:15px;color:#6e7b8f">Smart Box</div>
<div class="a" style="left:1540.5px;top:775.7px;font-size:14px;line-height:16px;color:#3a3f48">0</div>
<div class="a" style="left:1680.4px;top:777px;font-size:12px;line-height:15px;color:#6e7b8f">故障</div>
<div class="a" style="left:1713px;top:775.7px;font-size:14px;line-height:16px;color:#3a3f48">0</div>
<div class="a" style="left:1757px;top:777px;font-size:12px;line-height:15px;color:#6e7b8f">告警</div>
<div class="a" style="left:1788.8px;top:775.7px;font-size:14px;line-height:16px;color:#3a3f48">0</div>
<div class="card" style="left:296px;top:825px;width:1606px;height:85px"></div>
<div class="a" style="left:356px;top:840px;width:55px;height:55px;border-radius:50%;background:#e3f3e0"></div>
<svg class="a" style="left:356px;top:840px" width="55" height="55" viewBox="0 0 55 55"><path d="M13.7 23.5C17 20.5 23.5 21 25.8 28.5C21 29.5 16 28 13.7 23.5Z" fill="#b3dcbf"/><path d="M40.9 19C37 17 30 18 29 26C34 26.5 39 24 40.9 19Z" fill="#82c796"/><path d="M28 25.5C27.2 27 27 30 27.2 34" stroke="#bfe0c6" stroke-width="1.3" fill="none"/><ellipse cx="27" cy="35.8" rx="7" ry="1.5" fill="#c4e4cb"/></svg>
<div class="a" style="left:427px;top:848px;font-size:17px;line-height:19px;letter-spacing:0.3px;color:#1f2430">0.15 棵</div>
<div class="a t14" style="left:427.6px;top:871px;color:#8a9099">等效植树</div>
<div class="a" style="left:1037px;top:839.5px;width:55px;height:55px;border-radius:50%;background:#e8f4ff"></div>
<svg class="a" style="left:1037px;top:839.5px" width="55" height="55" viewBox="0 0 55 55"><defs><linearGradient id="cog" x1="0" y1="1" x2="1" y2="0"><stop offset="0" stop-color="#c7daf3"/><stop offset="1" stop-color="#94c0fb"/></linearGradient></defs><path d="M14.5 40.5C11.5 40.5 11.5 32 15.5 30C16 24 19.5 18.5 25.5 18.5C30.5 18.5 33 21.5 34.5 25C35.5 22.5 40 22 41 25.5C41.5 28 40.5 30 40 31C43 32.5 42.5 40.5 39 40.5Z" fill="url(#cog)"/><path d="M36 16.5L37.3 20.2C37.3 21.5 34.7 21.5 34.7 20.2Z" fill="#9cc4fa"/><text x="19.8" y="37.6" font-family="Liberation Sans" font-size="11.5" font-weight="bold" fill="#fff" letter-spacing="-0.3">CO</text></svg>
<div class="a" style="left:1108px;top:848px;font-size:17px;line-height:19px;letter-spacing:0.8px;color:#1f2430">110 kg</div>
<div class="a t14" style="left:1108.3px;top:871px;color:#8a9099">CO<span style="font-size:8.5px;position:relative;top:1.5px;margin:0 0.5px">2</span>减排</div>
<div class="a" style="left:1715px;top:839.5px;width:55px;height:55px;border-radius:50%;background:#fff0dd"></div>
<svg class="a" style="left:1715px;top:839.5px" width="55" height="55" viewBox="0 0 55 55"><defs><linearGradient id="fac" x1="0" y1="1" x2="1" y2="0"><stop offset="0" stop-color="#f3d4a5"/><stop offset="1" stop-color="#f5b663"/></linearGradient></defs><path d="M15.3 43V26C15.3 24.7 19 24.7 19 26V31H36V43Z" fill="url(#fac)"/><path d="M20 23.5C19 21.5 20.5 19.5 22.5 19.8C23.5 17.5 26 17 27.5 18.3C29 15 33.5 14.5 35.5 16.5C37.5 18 37 20.5 35.5 21C33 21.5 30 22 28 23C25 24.5 22 24.5 20 23.5Z" fill="#f6c788"/><rect x="25.5" y="34" width="1.6" height="1.6" fill="#fff"/><rect x="29" y="34" width="1.6" height="1.6" fill="#fff"/></svg>
<div class="a" style="left:1786px;top:848px;font-size:17px;line-height:19px;letter-spacing:0.8px;color:#1f2430">40 kg</div>
<div class="a t14" style="left:1786px;top:871px;color:#8a9099">节约煤炭</div>
<svg class="a" style="left:1866px;top:836.5px" width="16" height="16" viewBox="0 0 16 16" fill="none" stroke="#a6c8f4" stroke-width="1"><circle cx="8" cy="8" r="7.3"/><path d="M5.8 6.2C5.8 3.5 10.2 3.5 10.2 6.2C10.2 8 8 8 8 10"/><circle cx="8" cy="12" r="0.4" fill="#a6c8f4"/></svg>
<div class="a" style="left:1914px;top:0;width:6px;height:922px;background:#fff"></div><div class="a" style="left:1914px;top:262px;width:6px;height:658px;background:#ececec;border-radius:3px"></div>
</div><!--/main-->
</body></html>
